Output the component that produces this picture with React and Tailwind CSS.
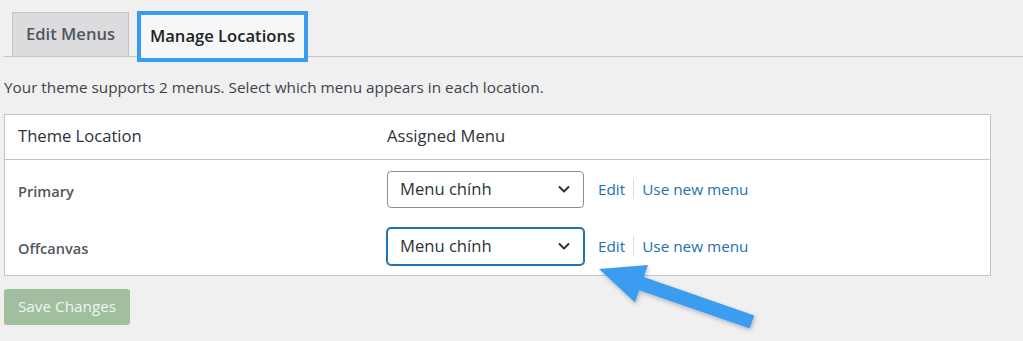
const font = { fontFamily: '"Open Sans", "Noto Sans", sans-serif' };

function Chevron() {
  return (
    <svg width="14" height="14" viewBox="0 0 14 14" className="text-[#2c3338]">
      <path d="M2.5 5l4.5 4.5L11.5 5" fill="none" stroke="currentColor" strokeWidth="2" strokeLinecap="round" strokeLinejoin="round" />
    </svg>
  );
}

function MenuSelect({ focused }) {
  return (
    <div
      className={
        "flex h-[37px] w-[197px] items-center justify-between rounded-[4px] border bg-white pl-3 pr-3 text-[16.6px] text-[#2c3338] " +
        (focused ? "border-[#2271b1] shadow-[0_0_0_1px_#2271b1]" : "border-[#8c8f94]")
      }
    >
      <span>Menu chính</span>
      <Chevron />
    </div>
  );
}

function LocationRow({ name, focused }) {
  return (
    <div className="flex h-[57px] items-center">
      <div className="w-[382px] pl-[13px] pt-[6px] text-[14.6px] font-semibold text-[#50575e]">{name}</div>
      <MenuSelect focused={focused} />
      <div className="ml-[14px] flex items-center text-[15.3px] text-[#2271b1]">
        <span>Edit</span>
        <span className="mx-2 h-5 w-px bg-[#dcdcde]" />
        <span>Use new menu</span>
      </div>
    </div>
  );
}

export default function App() {
  return (
    <div className="relative h-[341px] w-[1023px] overflow-hidden bg-[#f0f0f1]" style={font}>
      <div className="ml-[4px] flex h-[57px] items-end gap-[8px] border-b border-[#c3c4c7] pl-[8px]">
        <div className="-mb-px flex h-[45px] w-[117px] items-center justify-center border border-[#c3c4c7] bg-[#dcdcde] text-[16.6px] font-semibold text-[#50575e]">
          Edit Menus
        </div>
        <div className="-mb-[6px] flex h-[51px] w-[171px] items-center justify-center border-[4px] border-[#3a9cf0] bg-[#f6f7f7] text-[16.6px] font-semibold text-[#1d2327]">
          Manage Locations
        </div>
      </div>

      <p className="ml-[4px] mt-[19px] text-[15.3px] text-[#3c434a]">
        Your theme supports 2 menus. Select which menu appears in each location.
      </p>

      <div className="ml-[4px] mt-[15px] w-[987px] border border-[#c3c4c7] bg-white">
        <div className="flex h-[45px] items-center border-b border-[#c3c4c7] text-[16.6px] text-[#2c3338]">
          <div className="w-[382px] pl-[13px]">Theme Location</div>
          <div>Assigned Menu</div>
        </div>
        <div className="pt-[1px]">
          <LocationRow name="Primary" />
          <LocationRow name="Offcanvas" focused />
        </div>
      </div>

      <button className="ml-[4px] mt-[13px] flex h-[36px] w-[126px] items-center justify-center rounded-[3px] bg-[#9fbf9f] text-[15.3px] text-[#f0f6f0]">
        Save Changes
      </button>

      <svg className="pointer-events-none absolute left-0 top-0" width="1023" height="341" viewBox="0 0 1023 341">
        <defs>
          <filter id="sh" x="-20%" y="-20%" width="140%" height="140%">
            <feDropShadow dx="1" dy="2" stdDeviation="2" floodColor="#000" floodOpacity="0.25" />
          </filter>
        </defs>
        <polygon
          points="599,269 648,265 643.8,277.1 754.3,315.4 749.7,328.6 639.2,290.3 635,302.6"
          fill="#3a9cf0"
          filter="url(#sh)"
        />
      </svg>
    </div>
  );
}
